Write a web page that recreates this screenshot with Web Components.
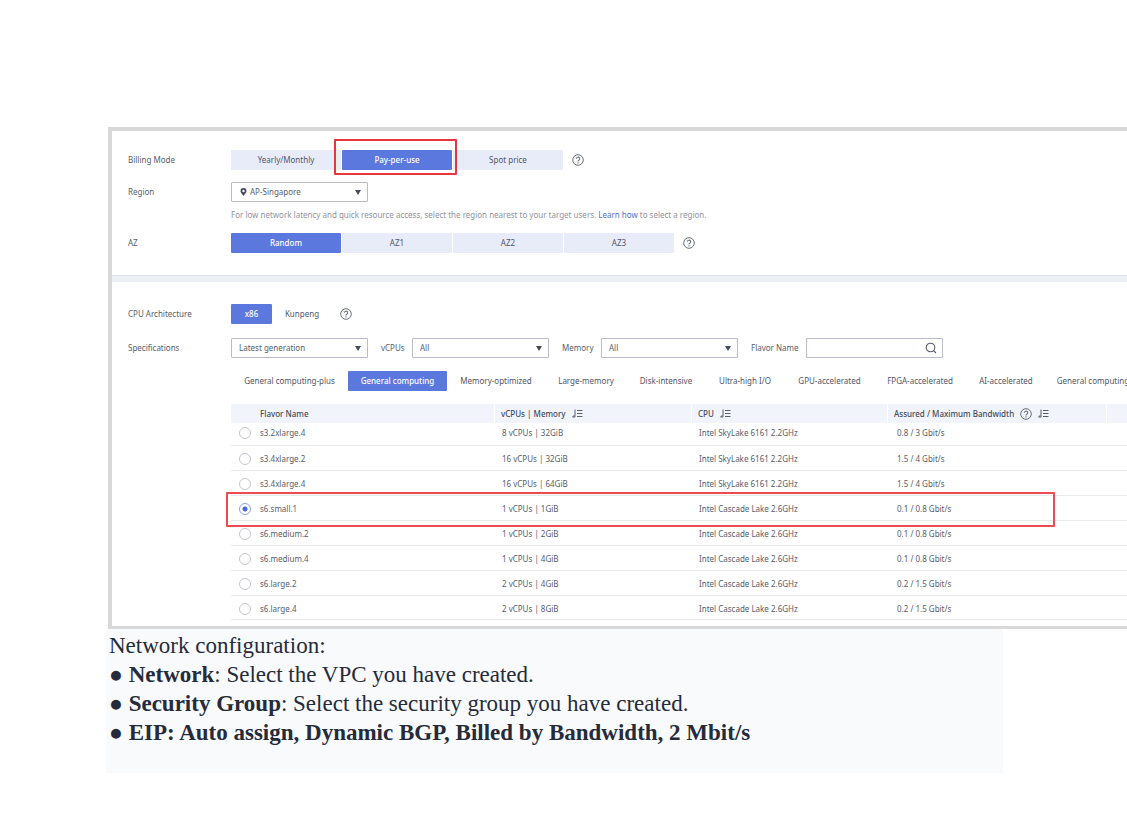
<!DOCTYPE html>
<html lang="en">
<head>
<meta charset="utf-8">
<title>Purchase an ECS</title>
<style>
body { margin: 0; background: #fff; overflow-x: hidden; }
</style>
</head>
<body>
<guide-page></guide-page>
<script>
const define = (name, html, setup) => {
  const tpl = document.createElement('template');
  tpl.innerHTML = html;
  customElements.define(name, class extends HTMLElement {
    constructor() {
      super();
      this.attachShadow({ mode: 'open' }).append(tpl.content.cloneNode(true));
    }
    connectedCallback() { if (setup) setup(this, this.shadowRoot); }
  });
};

define('help-icon', `
<style>
:host { display: inline-block; width: 12px; height: 12px; flex: none; }
svg { display: block; }
</style>
<svg width="12" height="12" viewBox="0 0 12 12" fill="none" stroke="#6b707c">
  <circle cx="6" cy="6" r="5.3"/>
  <path d="M4.3 4.8a1.7 1.6 0 1 1 2.5 1.4Q6 6.6 6 7.4" stroke-width="1.1"/>
  <path d="M6 8.3v1.1" stroke-width="1.1"/>
</svg>`);

define('sort-icon', `
<style>
:host { display: inline-block; width: 11px; height: 9px; flex: none; }
svg { display: block; }
</style>
<svg width="11" height="9" viewBox="0 0 11 9" fill="none" stroke="#575d6c">
  <path d="M3 .5v7.5H.6l1.6-1.8"/><path d="M5 1.5h5.5M5 4.5h5.5M5 7.5h5.5"/>
</svg>`);

define('form-row', `
<style>
:host { display: grid; grid-template-columns: 103px minmax(0, 1fr); }
.name { line-height: 20px; }
.body { display: flex; align-items: center; min-width: 0; }
</style>
<div class="name"><slot name="label"></slot></div>
<div><div class="body"><slot></slot></div><slot name="below"></slot></div>`);

define('option-group', `
<style>
:host { display: flex; gap: 1px; }
button {
  position: relative; width: 110px; height: 20px; padding: 0; border: 0; border-radius: 1px;
  background: #e8ecf8; color: #50566a; font: inherit; white-space: nowrap;
}
button[aria-pressed="true"] { background: #5b78de; color: #fff; font-weight: 500; }
:host([plain]) button { width: auto; padding: 0 13px; }
:host([plain]) button[aria-pressed="false"] { background: none; }
:host([plain]) { gap: 0; }
.marked::after {
  content: ""; position: absolute; inset: -11px -5px -5px -8px;
  border: 2px solid #e8373c; border-radius: 1px;
}
.marked { z-index: 1; }
</style>`, (host, root) => {
  if (root.querySelector('button')) return;
  const widths = (host.getAttribute('widths') || '').split(',');
  host.getAttribute('options').split('|').forEach((text, i) => {
    const b = document.createElement('button');
    b.type = 'button';
    b.textContent = text;
    b.setAttribute('aria-pressed', String(i === Number(host.getAttribute('selected'))));
    if (widths[i]) { b.style.width = widths[i] + 'px'; b.style.padding = 0; b.style.flex = 'none'; }
    if (host.getAttribute('marked') === String(i)) b.className = 'marked';
    b.onclick = () => root.querySelectorAll('button').forEach(o => o.setAttribute('aria-pressed', String(o === b)));
    root.append(b);
  });
});

define('flavor-table', `
<style>
:host { display: block; }
table { width: 100%; table-layout: fixed; border-collapse: separate; border-spacing: 0; }
th, td { box-sizing: border-box; padding: 0 0 0 8px; text-align: left; white-space: nowrap; }
th { height: 19px; padding-left: 7px; background: #f1f4fb; color: #454b5a; font-weight: 500; }
th + th { border-left: 1px solid #fff; padding-left: 6px; }
th:first-child, td:first-child { padding-left: 8px; }
th:first-child { padding-left: 29px; }
th div { display: flex; align-items: center; gap: 6px; }
td { height: 25px; padding-top: 2px; border-bottom: 1px solid #e9eaee; color: #575d6c; }
td:nth-child(4) { padding-left: 10px; }
tbody tr:first-child td { height: 23px; padding-top: 0; padding-bottom: 2px; }
tbody tr:last-child td { height: 24px; }
label { display: flex; align-items: center; gap: 9px; }
input {
  appearance: none; box-sizing: border-box; width: 12px; height: 12px; margin: 0;
  border: 1px solid #c3c6ce; border-radius: 50%; background: #fff;
}
input:checked { border-color: #8ba0ea; background: radial-gradient(circle, #4a69dc 0 2px, #fff 3px); }
.marked { position: relative; }
.marked::after {
  content: ""; position: absolute; inset: -4px 72px -6px -5px; pointer-events: none;
  border: 2px solid #ee4b50; border-radius: 1px;
}
</style>
<table>
  <colgroup><col style="width:263px"><col style="width:197px"><col style="width:196px"><col style="width:219px"><col style="width:21px"></colgroup>
  <thead><tr>
    <th>Flavor Name</th>
    <th><div>vCPUs | Memory <sort-icon></sort-icon></div></th>
    <th><div>CPU <sort-icon></sort-icon></div></th>
    <th><div>Assured / Maximum Bandwidth <help-icon></help-icon><sort-icon></sort-icon></div></th>
    <th></th>
  </tr></thead>
  <tbody></tbody>
</table>`, (host, root) => {
  const sky = 'Intel SkyLake 6161 2.2GHz', lake = 'Intel Cascade Lake 2.6GHz';
  root.querySelector('tbody').innerHTML = [
    ['s3.2xlarge.4', '8 vCPUs | 32GiB', sky, '0.8 / 3 Gbit/s'],
    ['s3.4xlarge.2', '16 vCPUs | 32GiB', sky, '1.5 / 4 Gbit/s'],
    ['s3.4xlarge.4', '16 vCPUs | 64GiB', sky, '1.5 / 4 Gbit/s'],
    ['s6.small.1', '1 vCPUs | 1GiB', lake, '0.1 / 0.8 Gbit/s'],
    ['s6.medium.2', '1 vCPUs | 2GiB', lake, '0.1 / 0.8 Gbit/s'],
    ['s6.medium.4', '1 vCPUs | 4GiB', lake, '0.1 / 0.8 Gbit/s'],
    ['s6.large.2', '2 vCPUs | 4GiB', lake, '0.2 / 1.5 Gbit/s'],
    ['s6.large.4', '2 vCPUs | 8GiB', lake, '0.2 / 1.5 Gbit/s']
  ].map(([name, ...rest], i) => `<tr${i === 3 ? ' class="marked"' : ''}>
    <td><label><input type="radio" name="flavor"${i === 3 ? ' checked' : ''}>${name}</label></td>
    ${rest.map(c => `<td>${c}</td>`).join('')}<td></td></tr>`).join('');
});

define('server-form', `
<style>
:host {
  display: block; overflow: hidden; background: #fff; color: #575d6c;
  border: solid #d8d8d8; border-width: 4px 0 3px 4px;
  font: 8px/12px "Noto Sans", "Open Sans", sans-serif;
}
section { display: grid; grid-template-columns: minmax(0, 1fr); padding-left: 16px; }
.basic { row-gap: 12px; padding-top: 19px; padding-bottom: 22px; }
.spec { row-gap: 14px; padding-top: 22px; padding-bottom: 6px; }
.band { height: 6px; background: #edf0f5; border-top: 1px solid #dfe2e8; }
help-icon { margin-left: 8px; }
.basic help-icon { margin-left: 9px; }
.hint { margin: 7px 0 0; color: #8f94a1; white-space: nowrap; }
a { color: #526ecc; text-decoration: none; }
.select { position: relative; display: flex; flex: none; }
select, input {
  box-sizing: border-box; width: 137px; height: 20px; margin: 0; padding: 0 7px;
  appearance: none; border: 1px solid #b9bcc6; border-radius: 1px; outline: 0;
  background: #fff; color: #575d6c; font: inherit;
}
.arrow { position: absolute; right: 7px; top: 8px; pointer-events: none; }
.pin { position: absolute; left: 9px; top: 6px; pointer-events: none; }
#region { padding-left: 18px; }
.search { position: relative; display: flex; flex: none; }
.search svg { position: absolute; right: 6px; top: 4px; }
.filters { display: flex; align-items: center; }
.filters > label { box-sizing: border-box; flex: none; padding-left: 13px; }
.stack { display: grid; grid-template-columns: minmax(0, 1fr); row-gap: 13px; margin-top: 13px; }
</style>
<section class="basic">
  <form-row><span slot="label">Billing Mode</span>
    <option-group options="Yearly/Monthly|Pay-per-use|Spot price" selected="1" marked="1"></option-group><help-icon></help-icon>
  </form-row>
  <form-row><label slot="label" for="region">Region</label>
    <div class="select">
      <select id="region"><option>AP-Singapore</option></select>
      <svg class="pin" width="7" height="8" viewBox="0 0 7 8"><path fill="#454b5a" fill-rule="evenodd" d="M3.5 0a3 3 0 0 1 3 3c0 1.600-1.500 3-3 5C2 6 .5 4.600.5 3a3 3 0 0 1 3-3zm0 1.800a1.200 1.200 0 1 0 0 2.400 1.200 1.200 0 0 0 0-2.400z"/></svg>
      <svg class="arrow" width="6" height="5" viewBox="0 0 6 5"><path fill="#454b5a" d="M0 0h6L3 5z"/></svg>
    </div>
    <p class="hint" slot="below">For low network latency and quick resource access, select the region nearest to your target users. <a href="#">Learn how</a> to select a region.</p>
  </form-row>
  <form-row><span slot="label">AZ</span>
    <option-group options="Random|AZ1|AZ2|AZ3" selected="0"></option-group><help-icon></help-icon>
  </form-row>
</section>
<div class="band"></div>
<section class="spec">
  <form-row><span slot="label">CPU Architecture</span>
    <option-group plain options="x86|Kunpeng" widths="41,60" selected="0"></option-group><help-icon></help-icon>
  </form-row>
  <form-row><label slot="label" for="generation">Specifications</label>
    <div class="filters">
      <div class="select"><select id="generation"><option>Latest generation</option></select>
        <svg class="arrow" width="6" height="5" viewBox="0 0 6 5"><path fill="#454b5a" d="M0 0h6L3 5z"/></svg></div>
      <label for="vcpus" style="width:44px">vCPUs</label>
      <div class="select"><select id="vcpus"><option>All</option></select>
        <svg class="arrow" width="6" height="5" viewBox="0 0 6 5"><path fill="#454b5a" d="M0 0h6L3 5z"/></svg></div>
      <label for="memory" style="width:52px">Memory</label>
      <div class="select"><select id="memory"><option>All</option></select>
        <svg class="arrow" width="6" height="5" viewBox="0 0 6 5"><path fill="#454b5a" d="M0 0h6L3 5z"/></svg></div>
      <label for="flavor" style="width:68px">Flavor Name</label>
      <div class="search"><input id="flavor" type="text">
        <svg width="12" height="12" viewBox="0 0 12 12" fill="none" stroke="#575d6c" stroke-width="1.1"><circle cx="5.500" cy="5.500" r="4.300"/><path d="M8.500 8.500l2.500 2.500"/></svg></div>
    </div>
    <div class="stack" slot="below">
      <option-group plain selected="1" widths="117,99,98,82,78,80,89,92,80,94"
        options="General computing-plus|General computing|Memory-optimized|Large-memory|Disk-intensive|Ultra-high I/O|GPU-accelerated|FPGA-accelerated|AI-accelerated|General computing"></option-group>
      <flavor-table></flavor-table>
    </div>
  </form-row>
</section>`);

define('guide-notes', `
<style>
:host {
  display: block; box-sizing: border-box; padding: 2px 3px 26px; background: #f8fafc; color: #252b3a;
  font: 23px/29px "Liberation Serif", serif;
}
p { margin: 0; }
</style>
<slot></slot>`);

define('guide-page', `
<style>
:host { display: block; padding-top: 127px; }
server-form { margin-left: 108px; }
guide-notes { margin: 0 124px 0 106px; }
p { margin: 0; }
</style>
<server-form></server-form>
<guide-notes>
  <p>Network configuration:</p>
  <p>● <b>Network</b>: Select the VPC you have created.</p>
  <p>● <b>Security Group</b>: Select the security group you have created.</p>
  <p>● <b>EIP: Auto assign, Dynamic BGP, Billed by Bandwidth, 2 Mbit/s</b></p>
</guide-notes>`);
</script>
</body>
</html>
